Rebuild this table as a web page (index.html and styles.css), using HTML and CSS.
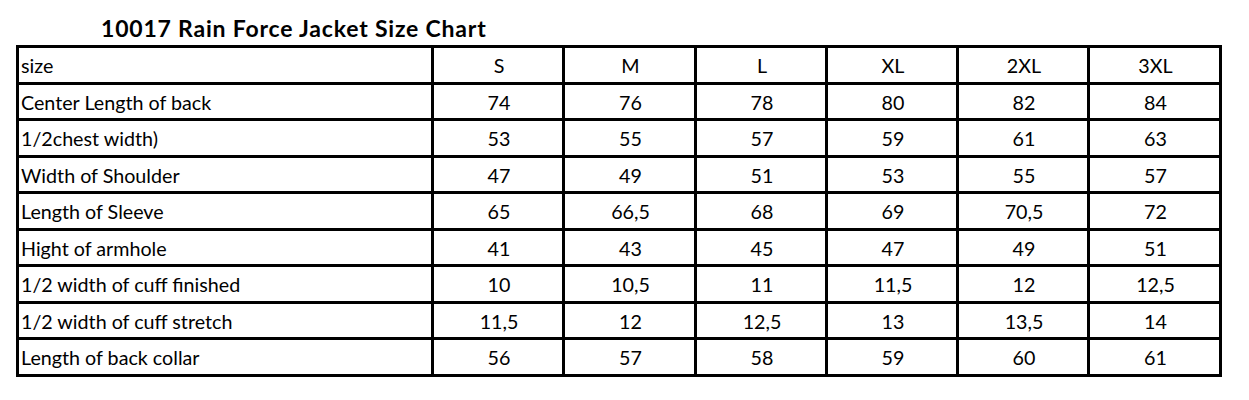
FILE: index.html
```html
<!DOCTYPE html>
<html>
<head>
<meta charset="utf-8">
<link rel="stylesheet" href="styles.css">
</head>
<body>
<div class="page">
  <h1 class="title">10017 Rain Force Jacket Size Chart</h1>
  <table class="chart">
    <colgroup>
      <col class="c-label"><col class="c-a"><col class="c-b"><col class="c-a"><col class="c-a"><col class="c-a"><col class="c-c">
    </colgroup>
    <tbody>
      <tr><td>size</td><td>S</td><td>M</td><td>L</td><td>XL</td><td>2XL</td><td>3XL</td></tr>
      <tr><td>Center Length of back</td><td>74</td><td>76</td><td>78</td><td>80</td><td>82</td><td>84</td></tr>
      <tr><td>1/2chest width)</td><td>53</td><td>55</td><td>57</td><td>59</td><td>61</td><td>63</td></tr>
      <tr><td>Width of Shoulder</td><td>47</td><td>49</td><td>51</td><td>53</td><td>55</td><td>57</td></tr>
      <tr><td>Length of Sleeve</td><td>65</td><td>66,5</td><td>68</td><td>69</td><td>70,5</td><td>72</td></tr>
      <tr><td>Hight of armhole</td><td>41</td><td>43</td><td>45</td><td>47</td><td>49</td><td>51</td></tr>
      <tr><td>1/2 width of cuff finished</td><td>10</td><td>10,5</td><td>11</td><td>11,5</td><td>12</td><td>12,5</td></tr>
      <tr><td>1/2 width of cuff stretch</td><td>11,5</td><td>12</td><td>12,5</td><td>13</td><td>13,5</td><td>14</td></tr>
      <tr><td>Length of back collar</td><td>56</td><td>57</td><td>58</td><td>59</td><td>60</td><td>61</td></tr>
    </tbody>
  </table>
</div>
</body>
</html>
```
FILE: styles.css
```css
html, body {
  margin: 0;
  padding: 0;
  background: #ffffff;
}
.page {
  padding: 16px 0 0 16px;
  font-family: "Lato", "Liberation Sans", sans-serif;
  color: #000;
}
.title {
  margin: 0 0 5px 85px;
  font-size: 23px;
  letter-spacing: 0.8px;
  font-weight: 700;
  line-height: 24px;
  height: 24px;
}
.chart {
  border-collapse: collapse;
  table-layout: fixed;
  width: 1204px;
}
.c-label { width: 415px; }
.c-a { width: 131px; }
.c-b { width: 132px; }
.c-c { width: 132px; }
.chart td {
  border: 3px solid #000;
  height: 30.5px;
  padding: 3px 0 0 2px;
  font-size: 19.7px;
  line-height: 20px;
  text-align: center;
  vertical-align: middle;
  white-space: nowrap;
}
.chart td:first-child {
  text-align: left;
}
```
